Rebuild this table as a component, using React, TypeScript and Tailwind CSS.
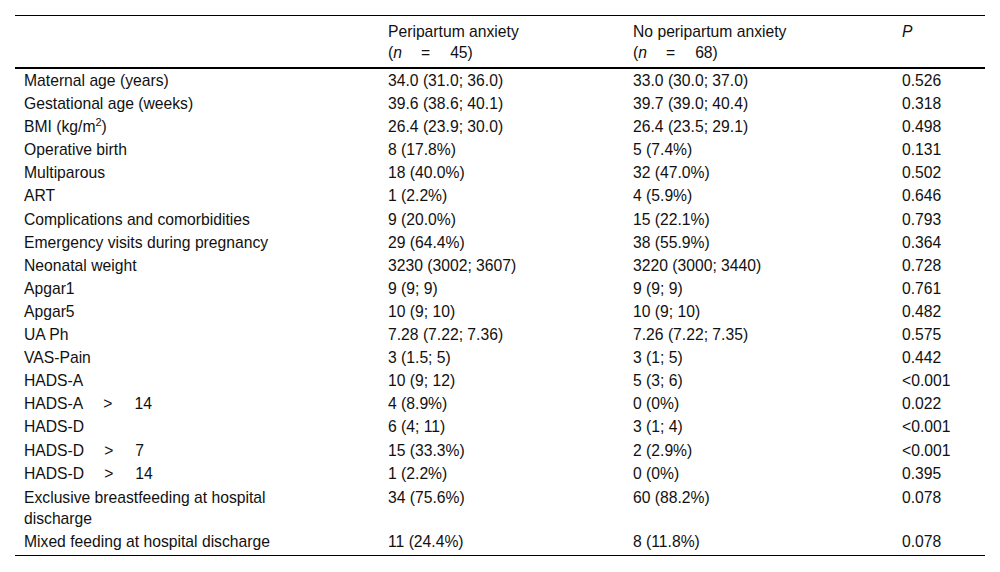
import React from 'react';

type Row = { label: React.ReactNode; a: string; b: string; p: string; wrap?: boolean; last?: boolean };

const Gt = ({ n }: { n: string }) => (
  <>
    <span className="ml-[20px] mr-[22px]">&gt;</span>
    {n}
  </>
);

const rows: Row[] = [
  { label: 'Maternal age (years)', a: '34.0 (31.0; 36.0)', b: '33.0 (30.0; 37.0)', p: '0.526' },
  { label: 'Gestational age (weeks)', a: '39.6 (38.6; 40.1)', b: '39.7 (39.0; 40.4)', p: '0.318' },
  {
    label: (
      <>
        BMI (kg/m<sup className="text-[11px] -top-[6px]">2</sup>)
      </>
    ),
    a: '26.4 (23.9; 30.0)',
    b: '26.4 (23.5; 29.1)',
    p: '0.498',
  },
  { label: 'Operative birth', a: '8 (17.8%)', b: '5 (7.4%)', p: '0.131' },
  { label: 'Multiparous', a: '18 (40.0%)', b: '32 (47.0%)', p: '0.502' },
  { label: 'ART', a: '1 (2.2%)', b: '4 (5.9%)', p: '0.646' },
  { label: 'Complications and comorbidities', a: '9 (20.0%)', b: '15 (22.1%)', p: '0.793' },
  { label: 'Emergency visits during pregnancy', a: '29 (64.4%)', b: '38 (55.9%)', p: '0.364' },
  { label: 'Neonatal weight', a: '3230 (3002; 3607)', b: '3220 (3000; 3440)', p: '0.728' },
  { label: 'Apgar1', a: '9 (9; 9)', b: '9 (9; 9)', p: '0.761' },
  { label: 'Apgar5', a: '10 (9; 10)', b: '10 (9; 10)', p: '0.482' },
  { label: 'UA Ph', a: '7.28 (7.22; 7.36)', b: '7.26 (7.22; 7.35)', p: '0.575' },
  { label: 'VAS-Pain', a: '3 (1.5; 5)', b: '3 (1; 5)', p: '0.442' },
  { label: 'HADS-A', a: '10 (9; 12)', b: '5 (3; 6)', p: '<0.001' },
  { label: <>HADS-A<Gt n="14" /></>, a: '4 (8.9%)', b: '0 (0%)', p: '0.022' },
  { label: 'HADS-D', a: '6 (4; 11)', b: '3 (1; 4)', p: '<0.001' },
  { label: <>HADS-D<Gt n="7" /></>, a: '15 (33.3%)', b: '2 (2.9%)', p: '<0.001' },
  { label: <>HADS-D<Gt n="14" /></>, a: '1 (2.2%)', b: '0 (0%)', p: '0.395' },
  { label: 'Exclusive breastfeeding at hospital discharge', a: '34 (75.6%)', b: '60 (88.2%)', p: '0.078', wrap: true },
  { label: 'Mixed feeding at hospital discharge', a: '11 (24.4%)', b: '8 (11.8%)', p: '0.078', last: true },
];

const N = ({ v }: { v: string }) => (
  <>
    (<i>n</i>
    <span className="ml-[19px] mr-[20px]">=</span>
    {v})
  </>
);

function cellPad(r: Row) {
  if (r.wrap) return 'leading-[21px] pt-[2px] pb-[1.5px]';
  if (r.last) return 'pt-[2px] pb-[3px]';
  return 'pt-[2px] pb-[1.1px]';
}

export default function App() {
  return (
    <div className="w-[1000px] h-[572px] bg-white pt-[15px] px-[15px] font-['Liberation_Sans',Arial,sans-serif] text-[15.7px] leading-[20px] text-[#111]">
      <table className="w-[970px] table-fixed border-collapse">
        <colgroup>
          <col className="w-[364px]" />
          <col className="w-[245px]" />
          <col className="w-[269px]" />
          <col className="w-[92px]" />
        </colgroup>
        <thead>
          <tr className="border-t border-black border-b-2">
            <th className="font-normal text-left align-top pl-[9px] pt-[6px] pb-[5px]"></th>
            <th className="font-normal text-left align-top pl-[9px] pt-[6px] pb-[5px]">
              Peripartum anxiety
              <br />
              <span className="inline-block translate-y-[1px]">
                <N v="45" />
              </span>
            </th>
            <th className="font-normal text-left align-top pl-[9px] pt-[6px] pb-[5px]">
              No peripartum anxiety
              <br />
              <span className="inline-block translate-y-[1px]">
                <N v="68" />
              </span>
            </th>
            <th className="font-normal text-left align-top pl-[9px] pt-[6px] pb-[5px] italic">P</th>
          </tr>
        </thead>
        <tbody>
          {rows.map((r, i) => (
            <tr key={i} className={r.last ? 'border-b border-black' : ''}>
              <td className={`align-top pl-[9px] pr-[70px] ${cellPad(r)}`}>{r.label}</td>
              <td className={`align-top pl-[9px] ${cellPad(r)}`}>{r.a}</td>
              <td className={`align-top pl-[9px] ${cellPad(r)}`}>{r.b}</td>
              <td className={`align-top pl-[9px] ${cellPad(r)}`}>{r.p}</td>
            </tr>
          ))}
        </tbody>
      </table>
    </div>
  );
}
